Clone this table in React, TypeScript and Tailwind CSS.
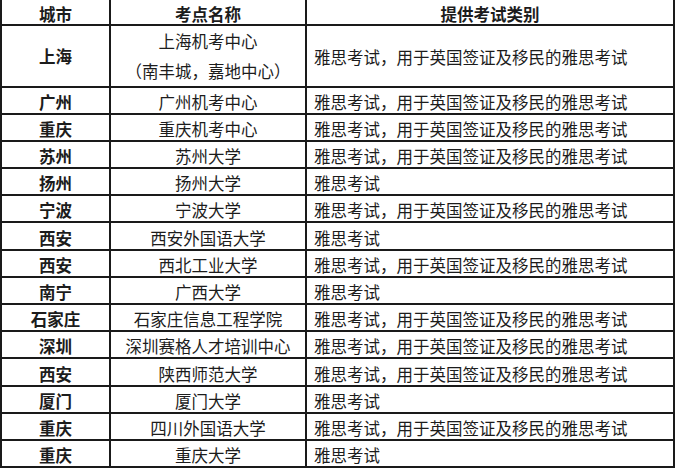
const rows: [string, string, string][] = [
  ['广州', '广州机考中心', '雅思考试，用于英国签证及移民的雅思考试'],
  ['重庆', '重庆机考中心', '雅思考试，用于英国签证及移民的雅思考试'],
  ['苏州', '苏州大学', '雅思考试，用于英国签证及移民的雅思考试'],
  ['扬州', '扬州大学', '雅思考试'],
  ['宁波', '宁波大学', '雅思考试，用于英国签证及移民的雅思考试'],
  ['西安', '西安外国语大学', '雅思考试'],
  ['西安', '西北工业大学', '雅思考试，用于英国签证及移民的雅思考试'],
  ['南宁', '广西大学', '雅思考试'],
  ['石家庄', '石家庄信息工程学院', '雅思考试，用于英国签证及移民的雅思考试'],
  ['深圳', '深圳赛格人才培训中心', '雅思考试，用于英国签证及移民的雅思考试'],
  ['西安', '陕西师范大学', '雅思考试，用于英国签证及移民的雅思考试'],
  ['厦门', '厦门大学', '雅思考试'],
  ['重庆', '四川外国语大学', '雅思考试，用于英国签证及移民的雅思考试'],
  ['重庆', '重庆大学', '雅思考试'],
];

const cell = 'border-2 border-[#1a1a1a] p-0 align-bottom leading-[20px]';

export default function App() {
  return (
    <div
      className="w-[676px] h-[470px] bg-white text-[16.5px] text-[#1c1c1c] overflow-hidden [text-spacing-trim:space-all]"
      style={{ fontFamily: '"Noto Sans CJK SC", "Noto Sans", sans-serif' }}
    >
      <table className="table-fixed border-collapse w-[675px] -mt-px">
        <colgroup>
          <col className="w-[109px]" />
          <col className="w-[196px]" />
          <col />
        </colgroup>
        <thead>
          <tr className="h-[25px]">
            <th className={`${cell} border-t-[#d0d0d0] border-t font-bold text-center`}>城市</th>
            <th className={`${cell} border-t-[#d0d0d0] border-t font-bold text-center`}>考点名称</th>
            <th className={`${cell} border-t-[#d0d0d0] border-t font-bold text-center`}>提供考试类别</th>
          </tr>
        </thead>
        <tbody>
          <tr className="h-[59px]">
            <td className={`${cell} align-middle font-bold text-center`}>上海</td>
            <td className={`${cell} align-middle text-center leading-[30px]`}>
              上海机考中心
              <br />
              （南丰城，嘉地中心）
            </td>
            <td className={`${cell} align-middle pl-[7px] pt-[2px]`}>雅思考试，用于英国签证及移民的雅思考试</td>
          </tr>
          {rows.map(([city, site, exam], i) => (
            <tr key={i} className="h-[27.2px]">
              <td className={`${cell} font-bold text-center pb-px`}>{city}</td>
              <td className={`${cell} text-center pb-px`}>{site}</td>
              <td className={`${cell} pl-[7px] pb-px`}>{exam}</td>
            </tr>
          ))}
        </tbody>
      </table>
    </div>
  );
}
